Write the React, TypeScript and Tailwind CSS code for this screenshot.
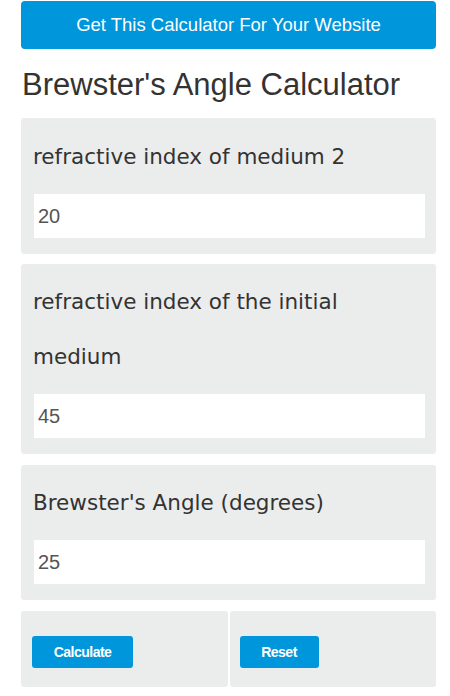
import React from "react";

const arial = { fontFamily: '"Liberation Sans", Arial, sans-serif' };

function Field({ label, value }: { label: React.ReactNode; value: string }) {
  return (
    <div className="rounded-[3px] bg-[#ebecec] pl-3 pr-[11px] pt-[10px] pb-4">
      <div className="text-[21.5px] leading-[55px] text-[#333] font-['DejaVu_Sans',sans-serif]">{label}</div>
      <div className="ml-px mt-[10px] flex h-[44px] items-center bg-white pl-1 text-[20px] text-[#555] font-['Liberation_Sans',Arial,sans-serif]">
        {value}
      </div>
    </div>
  );
}

export default function App() {
  return (
    <div className="w-[450px] bg-white pl-[21px] pr-[14px] pt-px" style={arial}>
      <div className="flex h-[48px] items-center justify-center rounded-[4px] bg-[#0096db] text-[18.5px] text-white">
        Get This Calculator For Your Website
      </div>
      <div className="mt-[18px] pl-px text-[31px] leading-[36px] text-[#333]">Brewster's Angle Calculator</div>
      <div className="mt-[15px] h-px bg-[#eeeeee]" />
      <div className="flex flex-col gap-[10px]">
        <Field label="refractive index of medium 2" value="20" />
        <Field
          label={
            <>
              refractive index of the initial
              <br />
              medium
            </>
          }
          value="45"
        />
        <div className="mt-px">
          <Field label="Brewster's Angle (degrees)" value="25" />
        </div>
        <div className="mt-px grid grid-cols-2 gap-[2px]">
          <div className="h-[76px] rounded-[3px] bg-[#ebecec] pl-[11px] pt-[25px]">
            <div className="flex h-[32px] w-[101px] items-center justify-center rounded-[3px] bg-[#0096db] text-[14px] font-bold tracking-[-0.5px] text-white">
              Calculate
            </div>
          </div>
          <div className="h-[76px] rounded-[3px] bg-[#ebecec] pl-[10px] pt-[25px]">
            <div className="flex h-[32px] w-[79px] items-center justify-center rounded-[3px] bg-[#0096db] text-[14px] font-bold tracking-[-0.5px] text-white">
              Reset
            </div>
          </div>
        </div>
      </div>
    </div>
  );
}
